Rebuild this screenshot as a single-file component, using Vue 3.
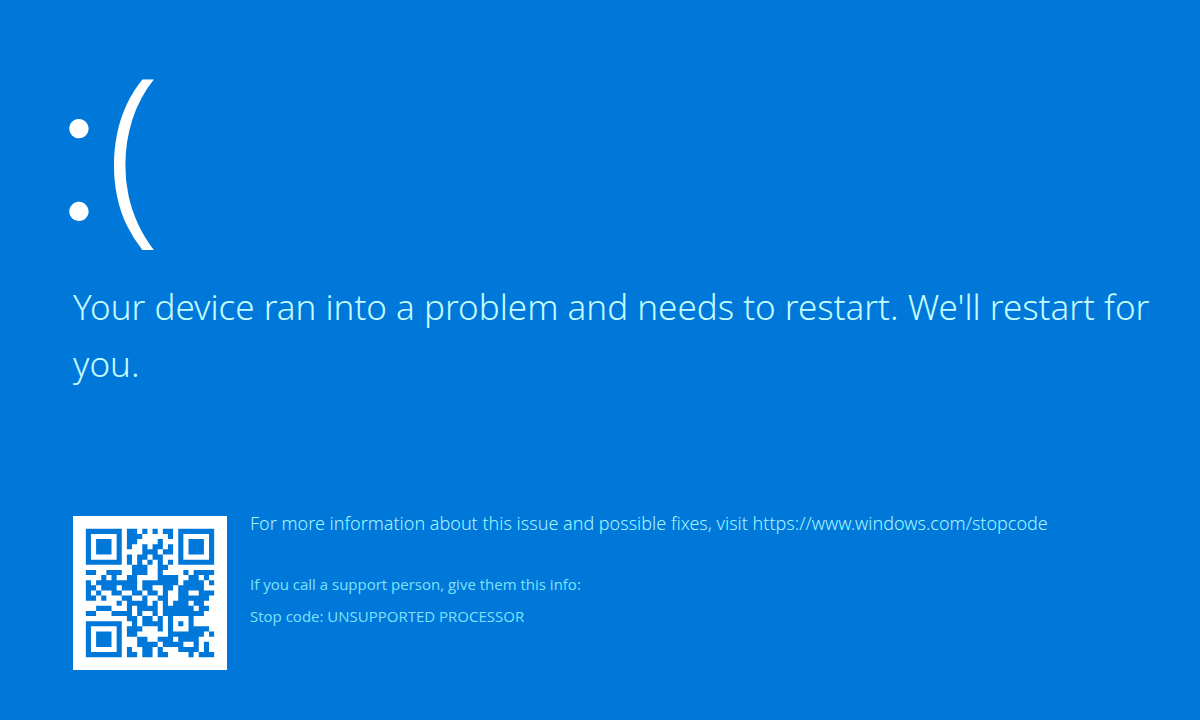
<script setup>
const rows = [
  '#######.##.#.#.##.#######',
  '#.....#.###.....#.#.....#',
  '#.###.#.##....#...#.###.#',
  '#.###.#.#..#.##.#.#.###.#',
  '#.###.#....###.##.#.###.#',
  '#.....#.#.##.##...#.....#',
  '#######.#.#.#.#.#.#######',
  '.........###..##.........',
  '##..###..###..#....#.####',
  '...#.#..##....####..##.#.',
  '#.########.#######.####.#',
  '##.###.###.##..##.#####..',
  '#.#..##..##.##.#..##..###',
  '##.#...##..#..##..######.',
  '......#.####.#.#.###.##..',
  '..###...#.####.######.##.',
  '##...####.#..#.########..',
  '........##.##.#.#...#....',
  '#######..#.####.#.#.#....',
  '#.....#.###...#.#...####.',
  '#.###.#.##......#######.#',
  '#.###.#...##..###.####...',
  '#.###.#...####.####..#.#.',
  '#.....#.#..##.#...####.#.',
  '#######.##.##.##....#.###'
]
const modules = rows
  .flatMap((row, y) => [...row].map((cell, x) => (cell === '#' ? `M${x} ${y}h1v1h-1z` : '')))
  .join('')
</script>

<template>
  <main class="screen">
    <div class="face"><span class="eyes">:</span><span>(</span></div>
    <h1 class="message">Your device ran into a problem and needs to restart. We'll restart for you.</h1>
    <section class="details">
      <svg class="qr" viewBox="-2.5 -2.5 30 30" role="img" aria-label="QR code">
        <path :d="modules" fill="#0078da" />
      </svg>
      <div class="info">
        <p class="more">For more information about this issue and possible fixes, visit <a href="https://www.windows.com/stopcode">https://www.windows.com/stopcode</a></p>
        <p class="support">If you call a support person, give them this info:</p>
        <p class="support">Stop code: UNSUPPORTED PROCESSOR</p>
      </div>
    </section>
  </main>
</template>

<style>
body {
  background: #0078da;
}
</style>

<style scoped>
.screen {
  box-sizing: border-box;
  min-height: 100vh;
  padding: 39px 24px 48px 73px;
  background: #0078da;
  color: #c4fcff;
  font-family: "Noto Sans", "Open Sans", sans-serif;
  font-weight: 300;
}
.face {
  display: flex;
  align-items: baseline;
  gap: 2px;
  height: 200px;
  margin-left: -19px;
  color: #fff;
  font-size: 195px;
  line-height: 200px;
}
.eyes {
  font-family: Lato, "Noto Sans", sans-serif;
  font-size: 208px;
}
.message {
  margin: 39px 0 0;
  font-size: 35px;
  font-weight: 300;
  line-height: 57px;
}
.details {
  display: flex;
  align-items: flex-start;
  gap: 23px;
  margin-top: 124px;
}
.qr {
  flex: none;
  width: 154px;
  height: 154px;
  background: #fff;
}
.info {
  color: #a4f5ff;
}
.info p {
  margin: 0;
}
.info .more {
  margin-bottom: 38px;
  font-size: 18px;
  line-height: 14px;
}
.info .support {
  color: #7fe2fa;
  font-family: "Open Sans", sans-serif;
  font-weight: 400;
  font-size: 15px;
  line-height: 32px;
}
.more a {
  color: inherit;
  text-decoration: none;
}
</style>
